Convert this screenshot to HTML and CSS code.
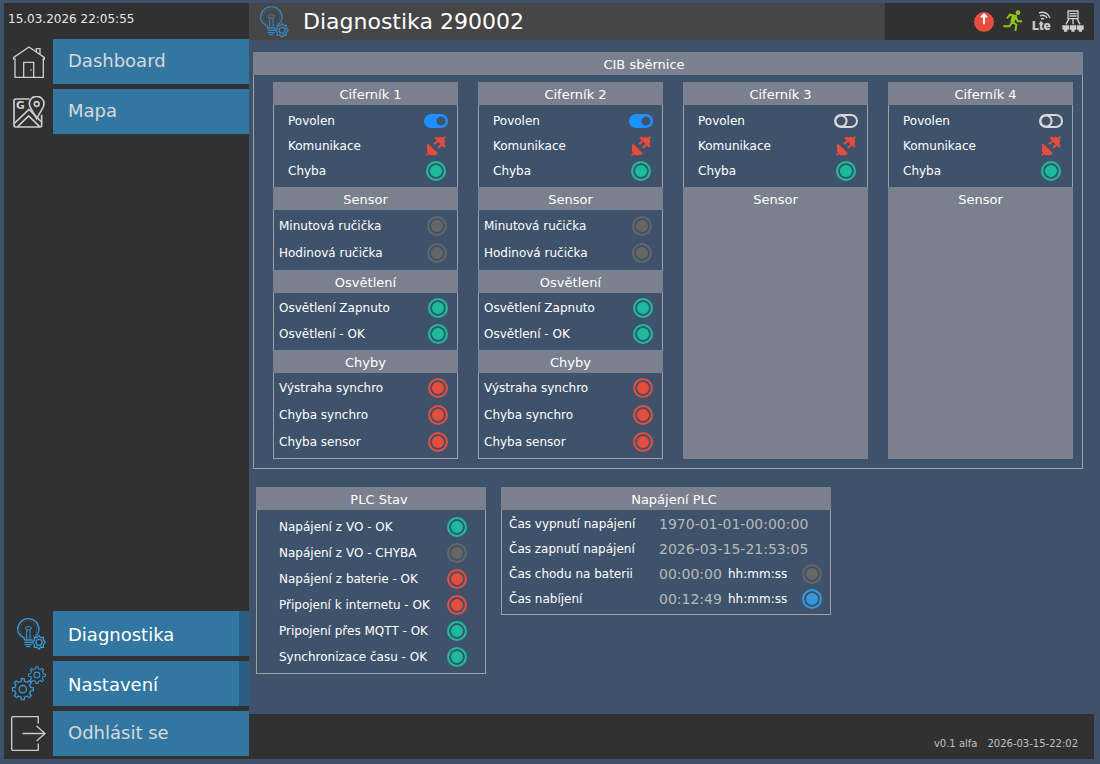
FILE: index.html
```html
<!DOCTYPE html>
<html lang="cs">
<head>
    <meta charset="UTF-8">
    <meta name="viewport" content="width=device-width, initial-scale=1.0">
    <title>Diagnostika 290002</title>
    <link rel="stylesheet" href="styles.css">
</head>
<body>
    <!-- Shared icons -->
    <svg class="sprite" aria-hidden="true">
        <symbol id="bulb" viewBox="0 0 87 96">
            <g fill="none" stroke="currentColor" stroke-width="4">
                <path d="M22 66V60C9 54 2 45 2 34A32 32 0 0 1 66 34C66 42 62 50 55 55"/>
                <circle cx="34" cy="34" r="25" stroke-width="2" stroke-dasharray="3 4"/>
                <path d="M29 62V37L25 30Q26 26 34 26T43 30L39 37V62M29 36H39" stroke-width="3"/>
                <path d="M22 66H46M22 73H46M23 80H44M28 86H40"/>
                <path d="M66 53L71 59L79 58L79 66L85 73L79 80V88L71 87L66 94L60 87L52 88V80L46 73L52 66V58L60 59Z"/>
                <circle cx="66" cy="73" r="9"/>
            </g>
        </symbol>
        <symbol id="tooth" viewBox="-34 -34 68 68">
            <path d="M-9.2 -22.2A24 24 0 0 1 -5 -23.5L-4 -31.5H4L5 -23.5A24 24 0 0 1 9.2 -22.2" fill="none" stroke="currentColor" stroke-width="4"/>
        </symbol>
        <symbol id="gear" viewBox="-34 -34 68 68">
            <g id="quarter">
                <use href="#tooth" x="-34" y="-34" width="68" height="68"/>
                <use href="#tooth" x="-34" y="-34" width="68" height="68" transform="rotate(45)"/>
            </g>
            <use href="#quarter" transform="rotate(90)"/>
            <use href="#quarter" transform="rotate(180)"/>
            <use href="#quarter" transform="rotate(270)"/>
            <circle r="11" fill="none" stroke="currentColor" stroke-width="4"/>
        </symbol>
        <symbol id="plug" viewBox="0 0 60 60">
            <path d="M2 27L7 23L34 50L35 55H30L28 58H13L9 54L3 60L0 57L6 50L3 46V31Z" fill="currentColor"/>
            <path d="M26 6L31 1L36 5L43 2L51 5L56 0L60 4L55 9L58 16L55 24L59 30L54 35Z" fill="currentColor"/>
            <path d="M37 13L24 25M48 24L36 36" fill="none" stroke="currentColor" stroke-width="6"/>
        </symbol>
    </svg>

    <div class="screen">
        <aside class="sidebar">
            <time class="clock">15.03.2026 22:05:55</time>
            <nav class="menu">
                <a href="#dashboard" class="menu-item">
                    <span class="menu-icon">
                        <svg width="32" height="32" viewBox="0 0 96 96" fill="none" stroke="currentColor" stroke-width="4">
                            <path d="M1 41V35L48 3L95 35V41M6 36V94H91V36M70 18V8H81V26M32 94V49H62V94"/>
                            <path d="M52 72H56"/>
                        </svg>
                    </span>
                    <span class="menu-label">Dashboard</span>
                </a>
                <a href="#mapa" class="menu-item">
                    <span class="menu-icon">
                        <svg width="32" height="32" viewBox="0 0 96 96" fill="none" stroke="currentColor" stroke-width="5">
                            <path d="M50 9H8Q3 9 3 14V88Q3 93 8 93H81Q86 93 86 88V56"/>
                            <path d="M71 68L54 38Q49 30 49 23A22 22 0 0 1 93 23Q93 30 88 38Z"/>
                            <circle cx="71" cy="24" r="7"/>
                            <path d="M4 82L48 40L84 76M14 92L47 60L80 92M56 46L66 60"/>
                            <text class="map-letter" x="9" y="39">G</text>
                        </svg>
                    </span>
                    <span class="menu-label">Mapa</span>
                </a>
            </nav>
            <nav class="menu menu-bottom">
                <a href="#diagnostika" class="menu-item active">
                    <span class="menu-icon bulb-icon"><svg width="29" height="32"><use href="#bulb"/></svg></span>
                    <span class="menu-label">Diagnostika</span>
                </a>
                <a href="#nastaveni" class="menu-item active">
                    <span class="menu-icon">
                        <svg width="35" height="35" viewBox="0 0 104 104">
                            <use href="#gear" x="1" y="35" width="68" height="68"/>
                            <use href="#gear" x="50" y="0" width="54" height="54"/>
                        </svg>
                    </span>
                    <span class="menu-label">Nastavení</span>
                </a>
                <a href="#odhlasit" class="menu-item">
                    <span class="menu-icon">
                        <svg width="35" height="35" viewBox="0 0 104 104" fill="none" stroke="currentColor" stroke-width="4">
                            <path d="M81 22V2H6Q2 2 2 6V98Q2 102 6 102H81V82"/>
                            <path d="M34 52H101M76 30L101 52L76 74"/>
                        </svg>
                    </span>
                    <span class="menu-label">Odhlásit se</span>
                </a>
            </nav>
        </aside>

        <header class="topbar">
            <div class="page-title">
                <svg width="29" height="32"><use href="#bulb"/></svg>
                <h1>Diagnostika 290002</h1>
            </div>
            <div class="status">
                <svg width="20" height="20" viewBox="0 0 60 60">
                    <circle cx="30" cy="30" r="30" fill="#e74c3c"/>
                    <path d="M30 37V8M21 16L30 7L39 16" fill="none" stroke="#ffffff" stroke-width="6"/>
                </svg>
                <svg class="raised" width="20" height="22" viewBox="0 0 60 66">
                    <circle cx="45" cy="8" r="7" fill="#93c11f"/>
                    <path d="M12 25L21 14L38 18L29 36L40 44L37 63M27 37L20 49H1M38 19L44 34H57" fill="none" stroke="#93c11f" stroke-width="6"/>
                    <path d="M27 15L42 19L33 39L22 35Z" fill="#93c11f"/>
                </svg>
                <svg class="raised" width="21" height="22" viewBox="0 0 21 22">
                    <text class="lte" x="0" y="20">Lte</text>
                    <path d="M7 3A8 8 0 0 1 18 8M8 6A5 5 0 0 1 15 8M9 9A3 3 0 0 1 12 9" fill="none" stroke="#cccccc" stroke-width="1.5"/>
                </svg>
                <svg class="raised" width="22" height="22" viewBox="0 0 66 66" fill="none" stroke="#cccccc" stroke-width="4">
                    <path d="M18 3H48V26H18ZM22 11H44M22 18H44M21 26L12 43M33 26V43M45 26L54 43"/>
                    <path d="M1 46H21V59H16V65H6V59H1ZM23 46H43V59H38V65H28V59H23ZM45 46H65V59H60V65H50V59H45Z" fill="#cccccc" stroke="none"/>
                </svg>
            </div>
        </header>

        <main class="content">
            <section class="panel">
                <h2 class="head head-wide">CIB sběrnice</h2>
                <div class="dials">
                    <article class="dial">
                        <h3 class="head head-shift">Ciferník 1</h3>
                        <ul class="rows rows-main">
                            <li><label for="povolen1">Povolen</label><input class="switch" type="checkbox" id="povolen1" checked></li>
                            <li>Komunikace<svg class="plug"><use href="#plug"/></svg></li>
                            <li>Chyba<span class="lamp green"></span></li>
                        </ul>
                        <h4 class="head">Sensor</h4>
                        <ul class="rows rows-sensor">
                            <li>Minutová ručička<span class="lamp"></span></li>
                            <li>Hodinová ručička<span class="lamp"></span></li>
                        </ul>
                        <h4 class="head">Osvětlení</h4>
                        <ul class="rows rows-light">
                            <li>Osvětlení Zapnuto<span class="lamp green"></span></li>
                            <li>Osvětlení - OK<span class="lamp green"></span></li>
                        </ul>
                        <h4 class="head">Chyby</h4>
                        <ul class="rows rows-errors">
                            <li>Výstraha synchro<span class="lamp red"></span></li>
                            <li>Chyba synchro<span class="lamp red"></span></li>
                            <li>Chyba sensor<span class="lamp red"></span></li>
                        </ul>
                    </article>

                    <article class="dial">
                        <h3 class="head head-shift">Ciferník 2</h3>
                        <ul class="rows rows-main">
                            <li><label for="povolen2">Povolen</label><input class="switch" type="checkbox" id="povolen2" checked></li>
                            <li>Komunikace<svg class="plug"><use href="#plug"/></svg></li>
                            <li>Chyba<span class="lamp green"></span></li>
                        </ul>
                        <h4 class="head">Sensor</h4>
                        <ul class="rows rows-sensor">
                            <li>Minutová ručička<span class="lamp"></span></li>
                            <li>Hodinová ručička<span class="lamp"></span></li>
                        </ul>
                        <h4 class="head">Osvětlení</h4>
                        <ul class="rows rows-light">
                            <li>Osvětlení Zapnuto<span class="lamp green"></span></li>
                            <li>Osvětlení - OK<span class="lamp green"></span></li>
                        </ul>
                        <h4 class="head">Chyby</h4>
                        <ul class="rows rows-errors">
                            <li>Výstraha synchro<span class="lamp red"></span></li>
                            <li>Chyba synchro<span class="lamp red"></span></li>
                            <li>Chyba sensor<span class="lamp red"></span></li>
                        </ul>
                    </article>

                    <article class="dial disabled">
                        <h3 class="head head-shift">Ciferník 3</h3>
                        <ul class="rows rows-main">
                            <li><label for="povolen3">Povolen</label><input class="switch" type="checkbox" id="povolen3"></li>
                            <li>Komunikace<svg class="plug"><use href="#plug"/></svg></li>
                            <li>Chyba<span class="lamp green"></span></li>
                        </ul>
                        <h4 class="head">Sensor</h4>
                    </article>

                    <article class="dial disabled">
                        <h3 class="head head-shift">Ciferník 4</h3>
                        <ul class="rows rows-main">
                            <li><label for="povolen4">Povolen</label><input class="switch" type="checkbox" id="povolen4"></li>
                            <li>Komunikace<svg class="plug"><use href="#plug"/></svg></li>
                            <li>Chyba<span class="lamp green"></span></li>
                        </ul>
                        <h4 class="head">Sensor</h4>
                    </article>
                </div>
            </section>

            <div class="plc">
                <section class="plc-state">
                    <h2 class="head head-plc">PLC Stav</h2>
                    <ul class="rows rows-plc">
                        <li>Napájení z VO - OK<span class="lamp green"></span></li>
                        <li>Napájení z VO - CHYBA<span class="lamp"></span></li>
                        <li>Napájení z baterie - OK<span class="lamp red"></span></li>
                        <li>Připojení k internetu - OK<span class="lamp red"></span></li>
                        <li>Pripojení přes MQTT - OK<span class="lamp green"></span></li>
                        <li>Synchronizace času - OK<span class="lamp green"></span></li>
                    </ul>
                </section>

                <section class="plc-power">
                    <h2 class="head head-plc">Napájení PLC</h2>
                    <div class="power-box">
                        <table class="power">
                            <tr>
                                <th scope="row">Čas vypnutí napájení</th>
                                <td class="value" colspan="3">1970-01-01-00:00:00</td>
                            </tr>
                            <tr>
                                <th scope="row">Čas zapnutí napájení</th>
                                <td class="value" colspan="3">2026-03-15-21:53:05</td>
                            </tr>
                            <tr>
                                <th scope="row">Čas chodu na baterii</th>
                                <td class="value time">00:00:00</td>
                                <td>hh:mm:ss</td>
                                <td class="lamp-cell"><span class="lamp"></span></td>
                            </tr>
                            <tr>
                                <th scope="row">Čas nabíjení</th>
                                <td class="value time">00:12:49</td>
                                <td>hh:mm:ss</td>
                                <td class="lamp-cell"><span class="lamp blue"></span></td>
                            </tr>
                        </table>
                    </div>
                </section>
            </div>
        </main>

        <footer class="footer">
            <span>v0.1 alfa</span>
            <span>2026-03-15-22:02</span>
        </footer>
    </div>
</body>
</html>
```
FILE: styles.css
```css
/* General Styles */
* {
    box-sizing: border-box;
}

body {
    margin: 0;
    background-color: #3f526b;
    color: #ffffff;
    font-family: Verdana, "DejaVu Sans", sans-serif;
    font-size: 12px;
}

h1, h2, h3, h4, ul {
    margin: 0;
    padding: 0;
    font-weight: normal;
}

.sprite {
    position: absolute;
    width: 0;
    height: 0;
}

.screen {
    display: grid;
    grid-template-columns: 245px 1fr;
    grid-template-rows: auto 1fr auto;
    min-height: 100vh;
    padding: 3px 6px 5px 4px;
}

/* Sidebar */
.sidebar {
    grid-row: 1 / 4;
    display: flex;
    flex-direction: column;
    background-color: #313131;
    padding-bottom: 3px;
}

.clock {
    height: 36px;
    padding-left: 4px;
    line-height: 32px;
    color: #e6e6e6;
}

.menu {
    display: flex;
    flex-direction: column;
    gap: 5px;
}

.menu-bottom {
    margin-top: auto;
}

.menu-item {
    display: flex;
    height: 45px;
    color: #cccccc;
    font-size: 18px;
    text-decoration: none;
}

.menu-icon {
    display: flex;
    align-items: center;
    justify-content: center;
    width: 49px;
}

.bulb-icon {
    padding-left: 6px;
}

.menu-label {
    flex: 1;
    padding-left: 15px;
    background-color: #3277a2;
    color: #d8d8d8;
    line-height: 44px;
}

.active .menu-icon {
    color: #3498db;
}

.active .menu-label {
    border-right: 10px solid #285e82;
    color: #ffffff;
    line-height: 47px;
}

.map-letter {
    font-size: 32px;
    font-weight: bold;
    fill: #cccccc;
    stroke: none;
}

/* Top bar */
.topbar {
    display: flex;
    height: 37px;
    background-color: #313131;
}

.page-title {
    display: flex;
    flex: 1;
    align-items: center;
    gap: 14px;
    padding-left: 11px;
    background-color: #464646;
    color: #3585bd;
}

.page-title h1 {
    color: #ffffff;
    font-size: 22px;
}

.status {
    display: flex;
    align-items: center;
    justify-content: flex-end;
    gap: 9px;
    width: 209px;
    padding-right: 10px;
}

.raised {
    margin-bottom: 2px;
}

.lte {
    font-family: Roboto, sans-serif;
    font-size: 13px;
    font-weight: 900;
    fill: #cccccc;
}

/* Panels */
.content {
    padding: 12px 11px 12px 4px;
}

.head {
    padding-top: 2px;
    background-color: #7b808e;
    font-size: 13px;
    line-height: 21px;
    text-align: center;
}

.head-wide {
    padding-right: 48px;
}

.head-shift {
    padding-left: 10px;
}

.head-plc {
    padding-left: 16px;
}

.dials {
    display: grid;
    grid-template-columns: repeat(4, 1fr);
    gap: 20px;
    padding: 7px 9px 9px 19px;
    border: 1px solid #a0a0a0;
    border-top: none;
}

.rows {
    padding: 2px 9px 3px 5px;
    border: 1px solid #a0a0a0;
    border-top: none;
    list-style: none;
}

.rows li {
    display: flex;
    align-items: center;
    justify-content: space-between;
    height: 26px;
}

.dial .rows:not(:last-child) {
    border-bottom: none;
}

.dial .rows-main {
    padding: 3px 11px 4px 14px;
}

.rows-main li {
    height: 25px;
}

.dial .rows-sensor {
    padding: 2px 10px 4px 5px;
}

.rows-sensor li,
.rows-errors li {
    height: 27px;
}

.dial .rows-errors {
    padding-top: 1px;
}

.disabled {
    background-color: #7b808e;
}

.disabled .rows {
    background-color: #3f526b;
}

/* Indicators */
.lamp {
    display: block;
    width: 20px;
    height: 20px;
    border: 2px solid #666666;
    border-radius: 50%;
    background-color: #666666;
    box-shadow: inset 0 0 0 2px #3f526b;
}

.green {
    border-color: #1abc9c;
    background-color: #1abc9c;
}

.red {
    border-color: #e74c3c;
    background-color: #e74c3c;
}

.blue {
    border-color: #3498db;
    background-color: #3498db;
}

.plug {
    width: 20px;
    height: 20px;
    color: #e74c3c;
}

.switch {
    appearance: none;
    width: 24px;
    height: 14px;
    margin: 0 -2px 0 0;
    border: 2px solid #d8d8d8;
    border-radius: 7px;
    background: radial-gradient(circle at 5px 5px, transparent 4px, #d8d8d8 5px, #d8d8d8 6px, transparent 7px);
}

.switch:checked {
    border-color: #1e90ff;
    background: radial-gradient(circle at 15px 5px, #3f526b 4px, #1e90ff 5px);
}

/* PLC */
.plc {
    display: flex;
    align-items: flex-start;
    gap: 15px;
    margin-top: 18px;
    padding-left: 3px;
}

.plc-state {
    flex: 0 1 230px;
}

.plc-power {
    flex: 0 1 330px;
}

.rows-plc {
    padding: 4px 18px 3px 22px;
}

.power-box {
    padding: 1px 8px 3px 7px;
    border: 1px solid #a0a0a0;
    border-top: none;
}

.power {
    width: 100%;
    border-collapse: collapse;
}

.power tr {
    height: 25px;
}

.power th,
.power td {
    padding: 0;
    font-weight: normal;
    text-align: left;
}

.power th {
    width: 150px;
}

.power .value {
    color: #b8b8b8;
    font-size: 14px;
}

.power .time {
    width: 69px;
}

.lamp-cell {
    width: 20px;
}

/* Footer */
.footer {
    display: flex;
    align-items: flex-end;
    justify-content: flex-end;
    gap: 10px;
    height: 45px;
    padding: 0 16px 10px 0;
    background-color: #313131;
    color: #c0c0c0;
    font-size: 10px;
}
```
